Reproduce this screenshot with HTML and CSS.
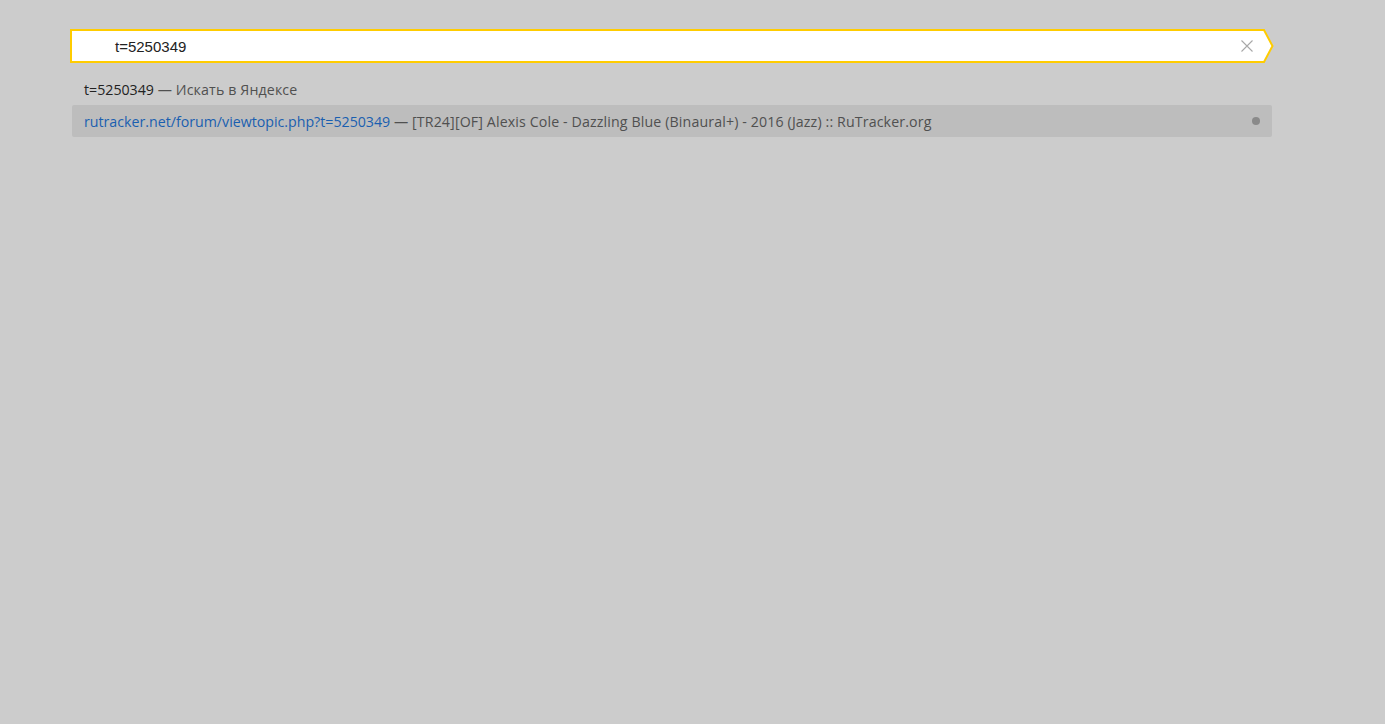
FILE: index.html
```html
<!DOCTYPE html>
<html lang="ru">
<head>
    <meta charset="UTF-8">
    <title>Табло</title>
    <link rel="stylesheet" href="styles.css">
</head>
<body>
    <div class="omnibox">
        <div class="search-row">
            <div class="search-box">
                <span class="query">t=5250349</span>
                <svg class="clear" width="12" height="12" viewBox="0 0 12 12">
                    <path d="M0.5 0.5 L11.5 11.5 M11.5 0.5 L0.5 11.5" stroke="#a8a8a8" stroke-width="1.1" fill="none"/>
                </svg>
            </div>
            <svg class="arrow" width="11" height="34" viewBox="0 0 11 34">
                <polygon points="0,1 1,1 9.5,17 1,33 0,33" fill="#fff"/>
                <polyline points="0,1 1,1 9.5,17 1,33 0,33" fill="none" stroke="#ffcc00" stroke-width="2"/>
            </svg>
        </div>
        <ul class="suggest">
            <li class="item">
                <span class="text"><span class="term">t=5250349</span> <span class="hint">— Искать в Яндексе</span></span>
            </li>
            <li class="item selected">
                <span class="text"><span class="url">rutracker.net/forum/viewtopic.php?t=5250349</span> <span class="hint">— [TR24][OF] Alexis Cole - Dazzling Blue (Binaural+) - 2016 (Jazz) :: RuTracker.org</span></span>
                <span class="dot"></span>
            </li>
        </ul>
    </div>
</body>
</html>
```

FILE: styles.css
```css
body {
    margin: 0;
    background-color: #cccccc;
    font-family: "Open Sans", "Noto Sans", sans-serif;
}
.omnibox {
    width: 1204px;
    margin-left: 70px;
    padding-top: 29px;
}
.search-row {
    display: flex;
    align-items: stretch;
    height: 34px;
}
.search-box {
    flex: 1;
    display: flex;
    align-items: center;
    background-color: #fff;
    border: 2px solid #ffcc00;
    border-right: none;
    padding-left: 43px;
    padding-right: 10px;
}
.query {
    flex: 1;
    font-family: "Liberation Sans", Arial, sans-serif;
    font-size: 15px;
    color: #222;
}
.clear {
    display: block;
}
.arrow {
    display: block;
}
.suggest {
    list-style: none;
    margin: 10px 0 0 2px;
    padding: 0;
    width: 1200px;
}
.item {
    display: flex;
    align-items: center;
    height: 32px;
    padding: 0 12px;
    font-size: 14.2px;
    color: #505050;
    white-space: nowrap;
    border-radius: 2px;
}
.hint {
    letter-spacing: 0.13px;
}
.term {
    color: #222;
}
.url {
    color: #1a5fb0;
}
.selected {
    background-color: #bdbdbd;
}
.dot {
    margin-left: auto;
    width: 8px;
    height: 8px;
    border-radius: 50%;
    background-color: #8a8a8a;
}
```
